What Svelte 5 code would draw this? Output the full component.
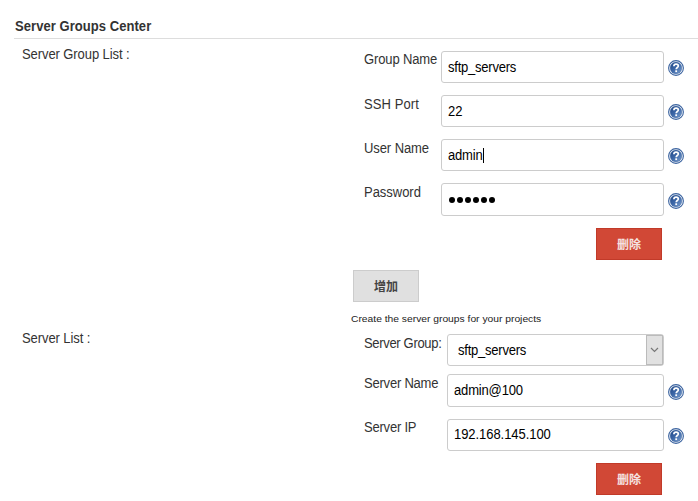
<script>
  const groupFields = [
    { label: 'Group Name', value: 'sftp_servers', h: 32, gap: 12, lift: 0, drop: 1, ls: -0.15, vs: -0.25 },
    { label: 'SSH Port', value: '22', h: 32, gap: 12, lift: 1, drop: 1, ls: 0.1, vs: 0 },
    { label: 'User Name', value: 'admin', caret: true, h: 32, gap: 12, lift: 1, drop: 1, ls: -0.1, vs: -0.2 },
    { label: 'Password', dots: 6, h: 33, gap: 12, lift: 1, ls: -0.04 }
  ];
  const serverFields = [
    { label: 'Server Group:', value: 'sftp_servers', select: true, h: 32, gap: 8, lift: 1, drop: 1, ls: -0.36, vs: -0.25 },
    { label: 'Server Name', value: 'admin@100', h: 33, gap: 12, lift: 1, drop: -1, ls: -0.24, vs: -0.18 },
    { label: 'Server IP', value: '192.168.145.100', h: 32, gap: 12, lift: 0, drop: -1, ls: -0.24, vs: -0.07 }
  ];
</script>

{#snippet help()}
  <svg class="help" width="16" height="16" viewBox="0 0 16 16">
    <defs>
      <linearGradient id="disc" x1="0" y1="0" x2="1" y2="1">
        <stop offset="0" stop-color="#1d4484" />
        <stop offset="0.5" stop-color="#3e69a9" />
        <stop offset="1" stop-color="#7fa2d0" />
      </linearGradient>
    </defs>
    <circle cx="8" cy="8" r="7.4" fill="#fff" stroke="#3c64a0" stroke-width="1.1" />
    <circle cx="8" cy="8" r="5.9" fill="url(#disc)" stroke="#3c64a0" stroke-width="0.4" />
    <path d="M5.9 6.2C5.9 4.8 6.8 4.1 8.1 4.1S10.3 4.9 10.3 6C10.3 7.5 8.2 7.6 8.2 9.3" fill="none" stroke="#fff" stroke-width="1.7" />
    <rect x="7.3" y="10.3" width="1.8" height="1.8" fill="#fff" />
  </svg>
{/snippet}

{#snippet field(f, wide)}
  <div class="row" style:height="{f.h}px" style:margin-bottom="{f.gap}px">
    <div class={['label', wide && 'wide']} style:padding-top="{f.lift}px">
      <span class="narrow" style:letter-spacing="{f.ls}px">{f.label}</span>
    </div>
    <div class={['box', f.select && 'select']}>
      {#if f.dots}
        <span class="dots">{#each { length: f.dots } as _}<i></i>{/each}</span>
      {:else}
        <span class="narrow" style:letter-spacing="{f.vs}px" style:margin-top="{f.drop}px">{f.value}</span>
      {/if}
      {#if f.caret}<span class="caret"></span>{/if}
      {#if f.select}
        <span class="drop">
          <svg width="9" height="6" viewBox="0 0 9 6"><path d="M1 1L4.5 4.5L8 1" fill="none" stroke="#777" stroke-width="1.2" /></svg>
        </span>
      {/if}
    </div>
    {#if !f.select}{@render help()}{/if}
  </div>
{/snippet}

<main>
  <h1><span class="narrow">Server Groups Center</span></h1>
  <section>
    <div class="name"><span class="narrow">Server Group List :</span></div>
    <div class="content first">
      <div class="fields">
        {#each groupFields as f}{@render field(f, false)}{/each}
        <button class="delete">删除</button>
      </div>
      <button class="add">增加</button>
      <p>Create the server groups for your projects</p>
    </div>
  </section>
  <section>
    <div class="name"><span class="narrow">Server List :</span></div>
    <div class="content second">
      <div class="fields">
        {#each serverFields as f}{@render field(f, true)}{/each}
        <button class="delete">删除</button>
      </div>
    </div>
  </section>
</main>

<style>
  :global(body) {
    background: #fff;
    overflow: hidden;
  }
  main {
    box-sizing: border-box;
    width: 698px;
    height: 501px;
    padding-top: 18px;
    overflow: hidden;
    font: 14px/17px "Liberation Sans", "Noto Sans CJK SC", sans-serif;
    color: #333;
    white-space: nowrap;
  }
  .narrow {
    display: inline-block;
    transform: scaleX(0.93);
    transform-origin: 0 50%;
  }
  h1 {
    margin: 0 0 0 14px;
    height: 20px;
    padding-left: 1px;
    border-bottom: 1px solid #ddd;
    font-size: 14px;
    letter-spacing: 0.05px;
    line-height: 17px;
  }
  section {
    display: flex;
  }
  .name {
    width: 329px;
    padding: 7px 0 0 22px;
    letter-spacing: -0.1px;
  }
  .content {
    flex: 1;
  }
  .first {
    height: 284px;
    padding-top: 12px;
    box-sizing: border-box;
  }
  .second {
    padding-top: 11px;
  }
  .fields {
    padding-left: 13px;
  }
  .row {
    display: flex;
    align-items: flex-start;
  }
  .label {
    width: 77px;
  }
  .wide {
    width: 83px;
  }
  .box {
    box-sizing: border-box;
    width: 223px;
    height: 100%;
    display: flex;
    align-items: center;
    padding-left: 6px;
    border: 1px solid #ccc;
    border-radius: 3px;
    color: #000;
  }
  .wide + .box {
    width: 217px;
  }
  .wide + .select {
    padding-left: 10px;
  }
  .caret {
    width: 1px;
    height: 15px;
    margin-left: -2px;
    background: #000;
  }
  .dots {
    display: flex;
    gap: 2px;
    padding: 1px 0 0 1px;
  }
  .dots i {
    width: 6px;
    height: 6px;
    border-radius: 50%;
    background: #000;
  }
  .drop {
    box-sizing: border-box;
    width: 17px;
    height: 30px;
    margin-left: auto;
    display: flex;
    align-items: center;
    justify-content: center;
    border: 1px solid #bbb;
    background: #e1e1e1;
  }
  .help {
    align-self: center;
    margin: 2px 0 0 4px;
  }
  button {
    display: block;
    box-sizing: border-box;
    width: 66px;
    height: 32px;
    padding: 0;
    font: bold 12px/28px "Noto Sans CJK SC", sans-serif;
  }
  .delete {
    margin-left: 232px;
    border: 1px solid #c13a29;
    background: #d14836;
    color: #f5e3e0;
  }
  .add {
    margin: 10px 0 0 2px;
    border: 1px solid #ccc;
    background: #e0e0e0;
    color: #444;
  }
  p {
    width: max-content;
    margin: 9px 0 0;
    font-size: 9.5px;
    line-height: 16px;
    color: #222;
    transform: scaleX(1.082);
    transform-origin: 0 50%;
  }
</style>
